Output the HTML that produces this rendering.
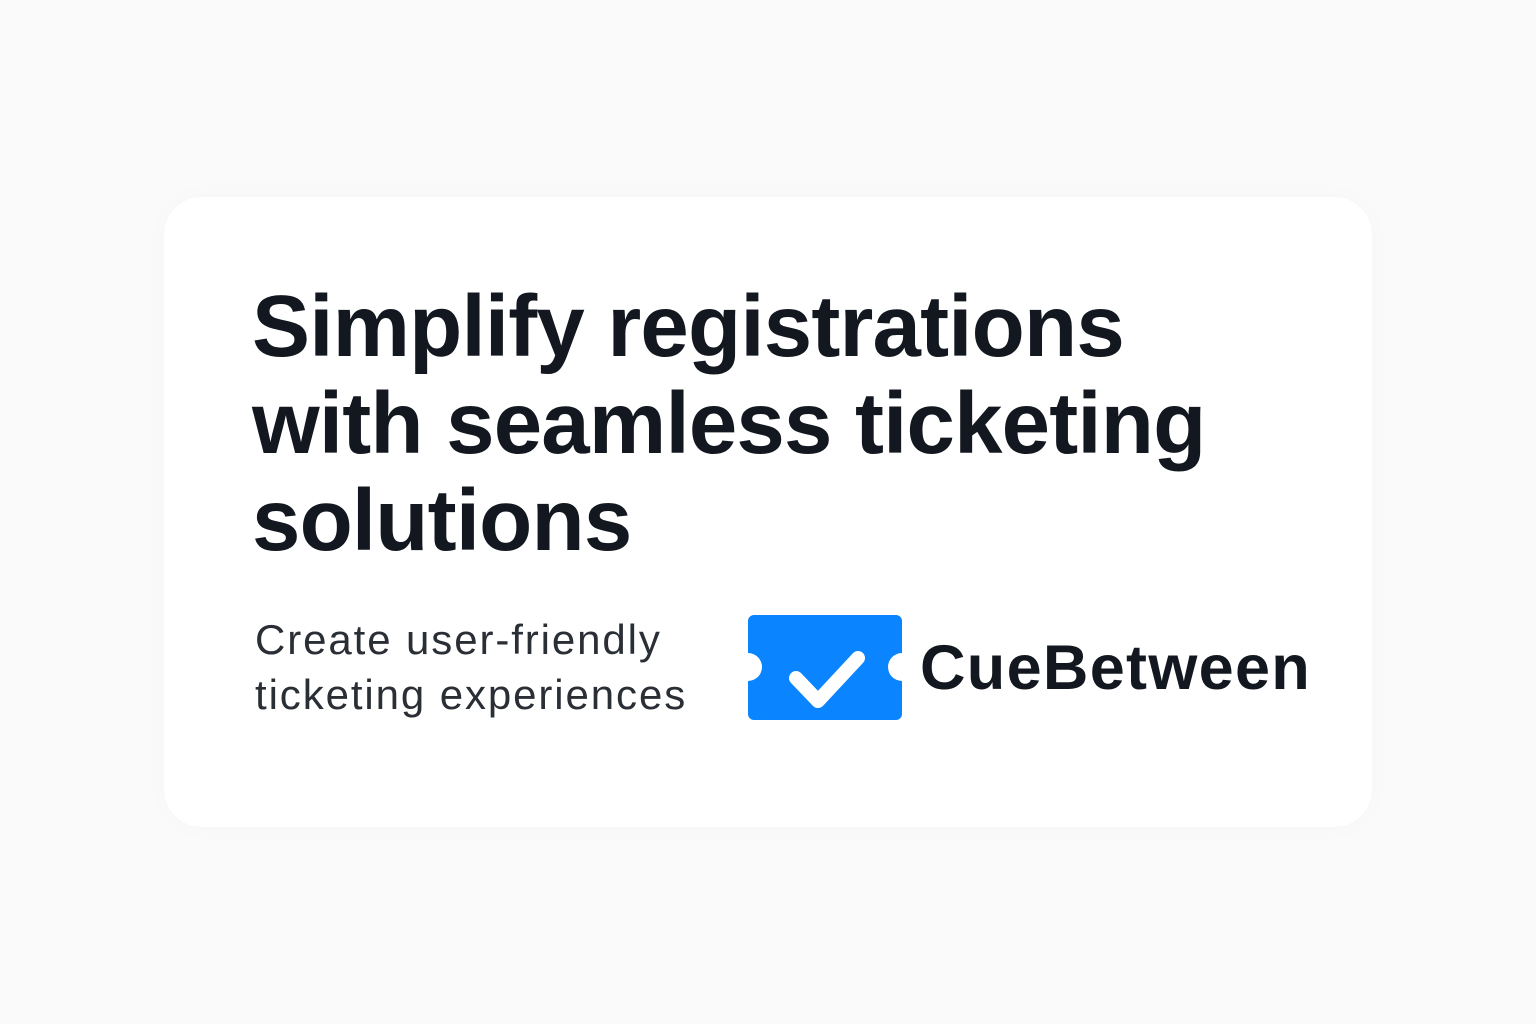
<!DOCTYPE html>
<html><head><meta charset="utf-8"><style>
html,body{margin:0;padding:0;width:1536px;height:1024px;background:#fafafa;overflow:hidden}
.card{position:absolute;left:164px;top:197px;width:1208px;height:630px;background:#fff;border-radius:38px;box-shadow:0 0 30px rgba(0,0,0,0.02)}
h1{position:absolute;left:252px;top:278px;margin:0;font:bold 87px/97px "Liberation Sans",sans-serif;color:#131820;letter-spacing:-0.8px;white-space:nowrap}
.sub{position:absolute;left:255px;top:612px;font:42px/55px "Liberation Sans",sans-serif;color:#2a2e35;letter-spacing:1.9px;white-space:nowrap}
.brand{position:absolute;left:920px;top:628px;font:bold 63px/80px "Liberation Sans",sans-serif;color:#131820;letter-spacing:1.3px;white-space:nowrap}
svg{position:absolute;left:748px;top:615px}
</style></head><body>
<div class="card"></div>
<h1>Simplify registrations<br>with seamless ticketing<br>solutions</h1>
<div class="sub">Create user-friendly<br>ticketing experiences</div>
<svg width="154" height="105" viewBox="0 0 154 105">
<path d="M6 0H148a6 6 0 0 1 6 6V38a14 14 0 0 0 0 28V99a6 6 0 0 1-6 6H6a6 6 0 0 1-6-6V66a14 14 0 0 0 0-28V6a6 6 0 0 1 6-6z" fill="#0a84ff"/>
<path d="M48 63L70 86L110 43" fill="none" stroke="#fff" stroke-width="14" stroke-linecap="round" stroke-linejoin="round"/>
</svg>
<div class="brand">CueBetween</div>
</body></html>
